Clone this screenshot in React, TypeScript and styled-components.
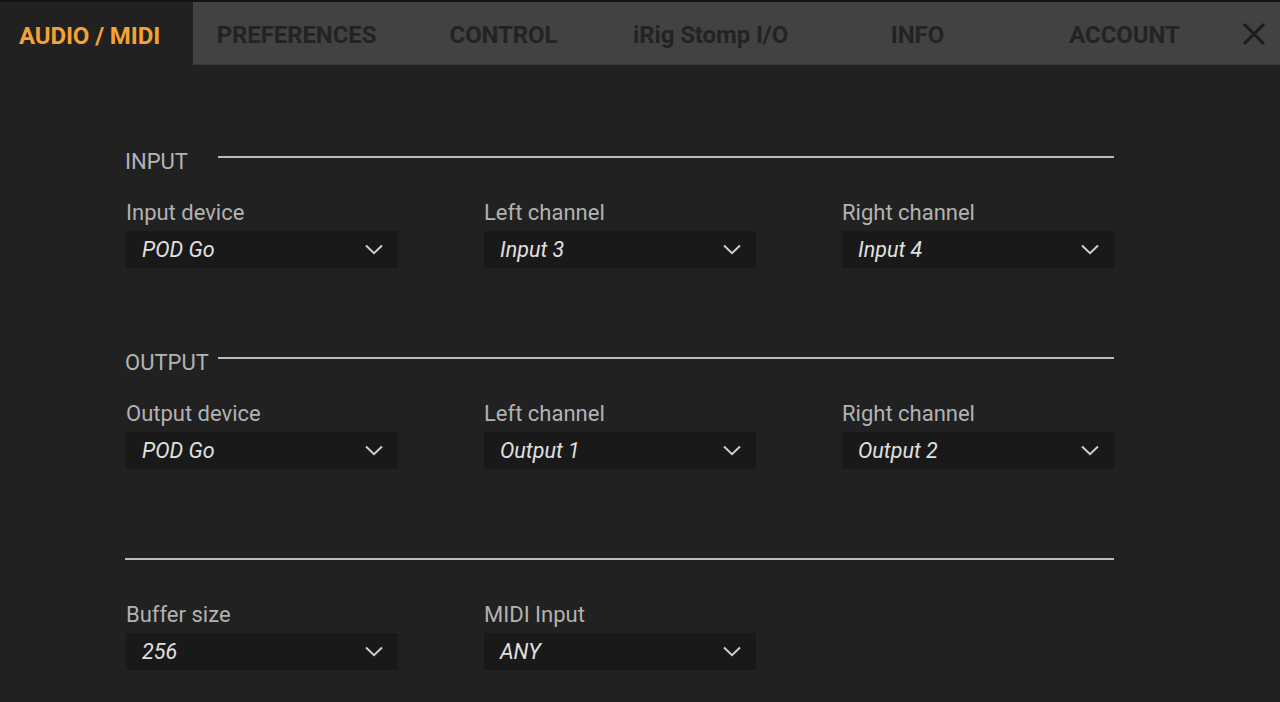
import React from "react";
import styled, { createGlobalStyle } from "styled-components";

const Global = createGlobalStyle`
  html, body { margin: 0; padding: 0; background: #212121; }
  body { font-family: Roboto, "Liberation Sans", sans-serif; width: 1280px; height: 702px; overflow: hidden; }
`;

const Page = styled.div`
  width: 1280px;
  height: 702px;
  overflow: hidden;
  background: #212121;
  display: flex;
  flex-direction: column;
  & > * { flex-shrink: 0; }
`;

const TopStrip = styled.div`
  height: 2px;
  background: #141414;
`;

const TabBar = styled.div`
  display: flex;
  height: 62px;
  background: #424242;
  border-bottom: 1px solid #383838;
`;

const Tab = styled.div<{ $w: number; $active?: boolean; $pr?: number }>`
  width: ${(p) => p.$w}px;
  padding-right: ${(p) => p.$pr ?? 0}px;
  padding-top: 4px;
  box-sizing: border-box;
  display: flex;
  align-items: center;
  justify-content: center;
  font-size: 24px;
  font-weight: 700;
  letter-spacing: -0.1px;
  color: ${(p) => (p.$active ? "#f4a233" : "#232323")};
  background: ${(p) => (p.$active ? "#212121" : "transparent")};
  margin-bottom: ${(p) => (p.$active ? "-1px" : "0")};
  white-space: nowrap;
`;

const Close = styled.div`
  flex: 1;
  display: flex;
  align-items: center;
  justify-content: center;
  padding-top: 2px;
`;

const Content = styled.div`
  width: 989px;
  margin-left: 125px;
  padding-top: 80px;
  display: flex;
  flex-direction: column;
`;

const Section = styled.div<{ $last?: boolean }>`
  height: ${(p) => (p.$last ? "auto" : "201px")};
  display: flex;
  flex-direction: column;
  flex-shrink: 0;
`;

const HeaderRow = styled.div`
  display: flex;
  align-items: center;
  height: 24px;
`;

const HeaderText = styled.div`
  width: 93px;
  font-size: 22px;
  color: #b4b4b4;
  line-height: 24px;
  margin-top: 10px;
`;

const Rule = styled.div`
  flex: 1;
  height: 2px;
  background: #bdbdbd;
`;

const FieldRow = styled.div`
  display: grid;
  grid-template-columns: 273px 273px 273px;
  column-gap: 85px;
  margin-top: 31px;
`;

const Field = styled.div`
  display: flex;
  flex-direction: column;
`;

const Label = styled.div`
  font-size: 22px;
  line-height: 26px;
  color: #b2b2b2;
  margin-left: 1px;
  margin-bottom: 5px;
`;

const Select = styled.div`
  height: 37px;
  background: #191919;
  display: flex;
  align-items: center;
  justify-content: space-between;
  padding: 0 15px 0 16px;
  margin-left: 1px;
  box-sizing: border-box;
`;

const Value = styled.span`
  font-size: 21.5px;
  font-style: italic;
  color: #e0e0e0;
`;

const Chevron = () => (
  <svg width="18" height="11" viewBox="0 0 18 11">
    <path d="M1 1.5 L9 9.2 L17 1.5" fill="none" stroke="#cfcfcf" strokeWidth="2" />
  </svg>
);

const Dropdown = ({ label, value }: { label: string; value: string }) => (
  <Field>
    <Label>{label}</Label>
    <Select>
      <Value>{value}</Value>
      <Chevron />
    </Select>
  </Field>
);

export default function App() {
  return (
    <Page>
      <Global />
      <TopStrip />
      <TabBar>
        <Tab $w={193} $pr={14} $active>AUDIO / MIDI</Tab>
        <Tab $w={207}>PREFERENCES</Tab>
        <Tab $w={207}>CONTROL</Tab>
        <Tab $w={207}>iRig Stomp I/O</Tab>
        <Tab $w={207}>INFO</Tab>
        <Tab $w={207}>ACCOUNT</Tab>
        <Close>
          <svg width="24" height="24" viewBox="0 0 24 24">
            <path d="M2 2 L22 22 M22 2 L2 22" stroke="#1c1c1c" strokeWidth="3" fill="none" />
          </svg>
        </Close>
      </TabBar>
      <Content>
        <Section>
          <HeaderRow>
            <HeaderText>INPUT</HeaderText>
            <Rule />
          </HeaderRow>
          <FieldRow>
            <Dropdown label="Input device" value="POD Go" />
            <Dropdown label="Left channel" value="Input 3" />
            <Dropdown label="Right channel" value="Input 4" />
          </FieldRow>
        </Section>
        <Section>
          <HeaderRow>
            <HeaderText>OUTPUT</HeaderText>
            <Rule />
          </HeaderRow>
          <FieldRow>
            <Dropdown label="Output device" value="POD Go" />
            <Dropdown label="Left channel" value="Output 1" />
            <Dropdown label="Right channel" value="Output 2" />
          </FieldRow>
        </Section>
        <Section $last>
          <HeaderRow>
            <Rule />
          </HeaderRow>
          <FieldRow>
            <Dropdown label="Buffer size" value="256" />
            <Dropdown label="MIDI Input" value="ANY" />
          </FieldRow>
        </Section>
      </Content>
    </Page>
  );
}
